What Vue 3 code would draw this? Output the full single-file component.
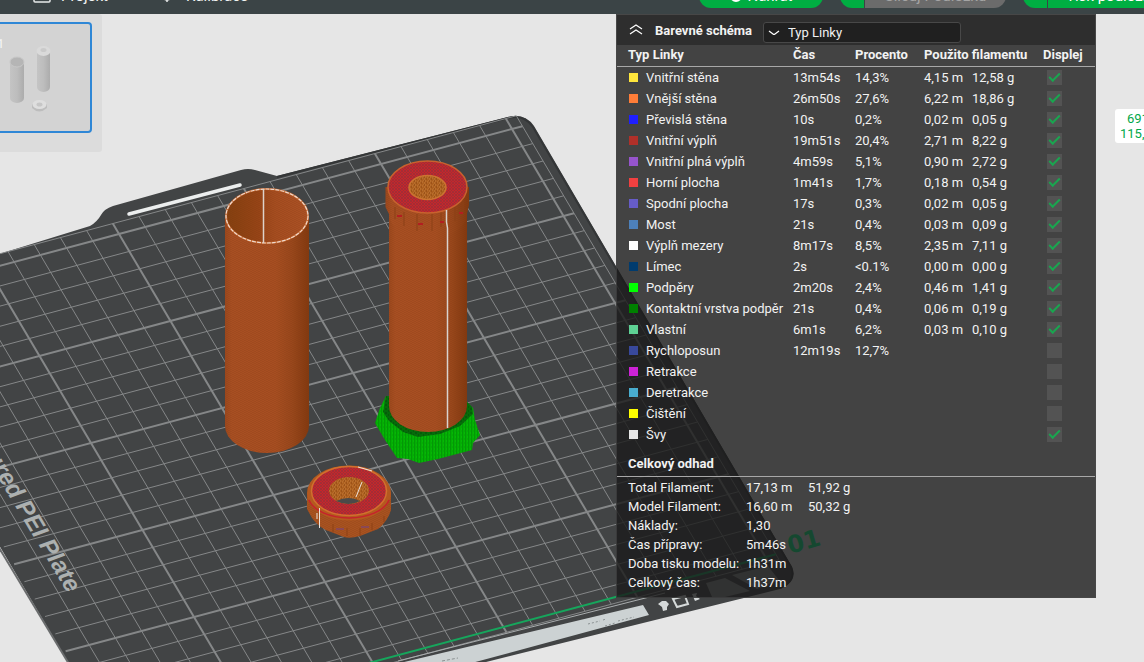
<script setup>
import { ref } from 'vue'

const lines = ref([
  { name: 'Vnitřní stěna', color: '#ffe63c', time: '13m54s', pct: '14,3%', m: '4,15 m', g: '12,58 g', on: true },
  { name: 'Vnější stěna', color: '#ff7d38', time: '26m50s', pct: '27,6%', m: '6,22 m', g: '18,86 g', on: true },
  { name: 'Převislá stěna', color: '#1f1fff', time: '10s', pct: '0,2%', m: '0,02 m', g: '0,05 g', on: true },
  { name: 'Vnitřní výplň', color: '#b03029', time: '19m51s', pct: '20,4%', m: '2,71 m', g: '8,22 g', on: true },
  { name: 'Vnitřní plná výplň', color: '#9654cc', time: '4m59s', pct: '5,1%', m: '0,90 m', g: '2,72 g', on: true },
  { name: 'Horní plocha', color: '#f04040', time: '1m41s', pct: '1,7%', m: '0,18 m', g: '0,54 g', on: true },
  { name: 'Spodní plocha', color: '#665cc7', time: '17s', pct: '0,3%', m: '0,02 m', g: '0,05 g', on: true },
  { name: 'Most', color: '#4d80ba', time: '21s', pct: '0,4%', m: '0,03 m', g: '0,09 g', on: true },
  { name: 'Výplň mezery', color: '#ffffff', time: '8m17s', pct: '8,5%', m: '2,35 m', g: '7,11 g', on: true },
  { name: 'Límec', color: '#003b6e', time: '2s', pct: '<0.1%', m: '0,00 m', g: '0,00 g', on: true },
  { name: 'Podpěry', color: '#00ff00', time: '2m20s', pct: '2,4%', m: '0,46 m', g: '1,41 g', on: true },
  { name: 'Kontaktní vrstva podpěr', color: '#008000', time: '21s', pct: '0,4%', m: '0,06 m', g: '0,19 g', on: true },
  { name: 'Vlastní', color: '#5ed194', time: '6m1s', pct: '6,2%', m: '0,03 m', g: '0,10 g', on: true },
  { name: 'Rychloposun', color: '#38489b', time: '12m19s', pct: '12,7%', m: '', g: '', on: false },
  { name: 'Retrakce', color: '#cd22d6', time: '', pct: '', m: '', g: '', on: false },
  { name: 'Deretrakce', color: '#49adcf', time: '', pct: '', m: '', g: '', on: false },
  { name: 'Čištění', color: '#ffff00', time: '', pct: '', m: '', g: '', on: false },
  { name: 'Švy', color: '#e6e6e6', time: '', pct: '', m: '', g: '', on: true },
])

const totals = [
  ['Total Filament:', '17,13 m', '51,92 g'],
  ['Model Filament:', '16,60 m', '50,32 g'],
  ['Náklady:', '1,30', ''],
  ['Čas přípravy:', '5m46s', ''],
  ['Doba tisku modelu:', '1h31m', ''],
  ['Celkový čas:', '1h37m', ''],
]

// Plate grid in cell units; every fifth line is heavier.
const left = -14.9
const right = 10.4
const back = -10.6
const front = 14.9
let thin = ''
let bold = ''
for (let i = -14; i <= 10; i++) {
  const d = `M${i} ${back}V${front}`
  if (i % 5 === 0) bold += d
  else thin += d
}
for (let j = -10; j <= 14; j++) {
  const d = `M${left} ${j}H${right}`
  if (j % 5 === 0) bold += d
  else thin += d
}
</script>

<template>
  <div class="app">
    <header class="topbar">
      <nav class="tabs">
        <a href="#projekt" class="tab">
          <svg width="18" height="18" viewBox="0 0 18 18" fill="none" stroke="#e8eaea" stroke-width="1.5">
            <rect x="1" y="1" width="16" height="14" rx="1" />
            <path d="M4 5h10M4 9h3M4 12h3M9 9h5v3h-5z" />
          </svg>
          Projekt
        </a>
        <a href="#kalibrace" class="tab">
          <svg width="18" height="18" viewBox="0 0 18 18" fill="none" stroke="#e8eaea" stroke-width="1.5">
            <circle cx="9" cy="8" r="5" />
            <path d="M9 12v3M3 12h3M12 12h3M9 1v3" />
          </svg>
          Kalibrace
        </a>
      </nav>
      <div class="actions">
        <button class="pill upload">
          <svg width="12" height="12" viewBox="0 0 12 12" fill="none" stroke="#fff" stroke-width="2">
            <circle cx="6" cy="6" r="5" /><path d="M6 3v5" />
          </svg>
          Nahrát
        </button>
        <div class="split">
          <button class="pill drop" aria-label="Možnosti slicování"></button>
          <button class="pill main off">Slicuj Podložku</button>
        </div>
        <div class="split">
          <button class="pill drop" aria-label="Možnosti tisku"></button>
          <button class="pill main wide">Tisk podložky</button>
        </div>
      </div>
    </header>

    <main class="view">
      <svg class="scene" viewBox="0 14 1144 648" preserveAspectRatio="xMinYMin slice" aria-hidden="true">
        <defs>
          <linearGradient id="wall" x1="0" x2="1">
            <stop offset="0" stop-color="#9c481d" />
            <stop offset=".08" stop-color="#a84f22" />
            <stop offset=".6" stop-color="#a74e21" />
            <stop offset=".8" stop-color="#99471b" />
            <stop offset="1" stop-color="#83390f" />
          </linearGradient>
          <linearGradient id="bore" x1="0" x2="1">
            <stop offset="0" stop-color="#84400f" />
            <stop offset=".4" stop-color="#974416" />
            <stop offset=".6" stop-color="#a64d20" />
            <stop offset="1" stop-color="#ab5124" />
          </linearGradient>
          <linearGradient id="gray" x1="0" x2="1">
            <stop offset="0" stop-color="#c4c4c4" />
            <stop offset=".5" stop-color="#bdbdbd" />
            <stop offset="1" stop-color="#acacac" />
          </linearGradient>
          <pattern id="layers" width="4" height="2" patternUnits="userSpaceOnUse">
            <path d="M0 .5h2M2 1.5h2" stroke="#6e3211" stroke-opacity=".15" stroke-width="1" />
          </pattern>
          <pattern id="weave" width="3" height="3" patternUnits="userSpaceOnUse">
            <rect width="3" height="3" fill="#c5262b" />
            <path d="M0 0l3 3M0 3l3-3" stroke="#96303a" stroke-width=".7" />
          </pattern>
          <pattern id="grain" width="5" height="4" patternUnits="userSpaceOnUse">
            <rect width="5" height="4" fill="#ad601f" />
            <path d="M0 1h1M3 0h1M2 2h1M4 3h1" stroke="#c47c3a" />
            <path d="M1 3h1M4 1h1" stroke="#8b4512" />
          </pattern>
          <pattern id="ribs" width="3" height="4" patternUnits="userSpaceOnUse">
            <rect width="3" height="4" fill="#04ad04" />
            <path d="M.5 0v4" stroke="#039806" />
            <path d="M2 1h1" stroke="#05c405" />
          </pattern>
          <pattern id="moss" width="5" height="4" patternUnits="userSpaceOnUse">
            <rect width="5" height="4" fill="#066c0a" />
            <path d="M0 1h2M3 3h1" stroke="#044b09" />
          </pattern>
        </defs>

        <path d="M-4 255L90 226Q97 222 101 215Q104 209 113 206L241 170Q248 168 255 170L277 176L508 117Q525 113 534 126L792 567Q798 581 780 589L478 664H69L-4 540Z" fill="#424445" />
        <path d="M-2 546L69 664" stroke="#6a6c6d" stroke-width="2" />
        <path d="M277 177L508 118Q524 114 533 127L791 567Q797 581 780 588" fill="none" stroke="#343637" stroke-width="2" />
        <path d="M129 214L240 185" stroke="#eceeee" stroke-width="3.5" stroke-linecap="round" />

        <g transform="matrix(26.2 -7 10.3 17.4 353 373)" fill="none">
          <path class="line" :d="thin" stroke="#858788" stroke-width="1" />
          <path class="line" :d="bold" stroke="#858788" stroke-width="2" />
          <path class="line" d="M-14.9 -10.6H10.4V14.9H-14.9" stroke="#858788" stroke-width="1" />
          <path class="line" d="M-8 14.6H10.4" stroke="#16a65c" stroke-width="2" />
        </g>

        <g transform="translate(68 594) rotate(59)">
          <text class="plate-name" text-anchor="end">Textured PEI Plate</text>
        </g>
        <g transform="translate(790 554) rotate(-16)">
          <text class="plate-no">01</text>
        </g>

        <path d="M400 663L643 605L649 615L468 664Z" fill="#ccd2d3" />
        <path d="M398 661L665 593" stroke="#a9adae" stroke-width="1" />
        <g stroke="#8b9192" stroke-width="1" fill="none">
          <path d="M588 624l12-3M603 620l3-1M605 626l10-3M618 621l16-4" stroke-dasharray="2 2" />
          <path d="M442 661l16-3" stroke-dasharray="3 2" />
        </g>
        <path d="M658 604l4-3 4 0 3 3-2 3 0 3-4 1-1-4z" fill="#d6dada" />
        <path d="M673 599l12-3 3 8-11 3z" fill="none" stroke="#d6dada" stroke-width="2" />
        <path d="M692 594l5-1-1 3 4 3-5 2z" fill="#d6dada" />
        <path d="M706 583L725 578L750 591L725 597H712ZM732 575L768 566L775 575L779 580L757 589Z" fill="#8d8f90" />

        <!-- open tube -->
        <path d="M225 216V426A42 27 0 0 0 309 426V216Z" fill="url(#wall)" />
        <path d="M225 216V426A42 27 0 0 0 309 426V216Z" fill="url(#layers)" />
        <ellipse cx="267" cy="216" rx="41" ry="27" fill="url(#bore)" />
        <ellipse cx="267" cy="216" rx="41" ry="27" fill="url(#layers)" />
        <ellipse cx="267" cy="216" rx="41" ry="27" fill="none" stroke="#c4672f" stroke-width="2" />
        <ellipse cx="267" cy="216" rx="41" ry="27" fill="none" stroke="#eed8cc" stroke-width="1.2" stroke-dasharray="4 1" />
        <path d="M263.500 189V243" stroke="#ddd2ca" stroke-width="1.5" />

        <!-- support skirt -->
        <path d="M386 396L380 408L375 423L385 440L397 458L408 459L419 463L438 459L472 450L473 443L480 435L475 420L473 408L467 402Z" fill="url(#ribs)" />
        <path d="M386 396L383 412L389 421L403 432L418 437L440 434L460 426L473 414L472 407L467 402Z" fill="url(#moss)" />

        <!-- capped tube -->
        <path d="M389 200V406A39 26 0 0 0 467 406V200Z" fill="url(#wall)" />
        <path d="M389 200V406A39 26 0 0 0 467 406V200Z" fill="url(#layers)" />
        <path d="M385.500 187V207L389 214A39 24 0 0 0 467 214L469 205V187Z" fill="url(#wall)" />
        <path d="M385.500 187V207L389 214A39 24 0 0 0 467 214L469 205V187Z" fill="url(#layers)" />
        <path d="M395 207v12M404 212v14M417 214v17M432 214v17M441 211v16M455 207v14M463 200v12" stroke="#8b4016" stroke-width="1" />
        <path d="M397 216h5M418 224h5M440 222h4M459 213h4" stroke="#b31e21" stroke-width="2" />
        <ellipse cx="427.500" cy="187" rx="39.500" ry="26" fill="url(#weave)" stroke="#c8622e" stroke-width="1.500" />
        <ellipse cx="427.500" cy="187.500" rx="18.500" ry="12" fill="url(#grain)" stroke="#cb7431" stroke-width="1.500" />
        <path d="M446.500 210V222L447.500 228V428" stroke="#d9d3ce" stroke-width="1.500" fill="none" />

        <!-- ring -->
        <path d="M307 493V509L312 518Q320 529 331 532L344 537Q350 539 360 536L378 529Q388 521 391 510V493Z" fill="#a85220" />
        <path d="M307 493V509L312 518Q320 529 331 532L344 537Q350 539 360 536L378 529Q388 521 391 510V493Z" fill="url(#layers)" />
        <ellipse cx="349" cy="493" rx="42" ry="27.500" fill="#b4591f" />
        <path d="M309 500A41 23 0 0 0 389 500" fill="none" stroke="#c6222c" stroke-width="1.500" />
        <ellipse cx="349" cy="491" rx="37.500" ry="24.500" fill="url(#weave)" stroke="#d1702e" stroke-width="1.500" />
        <ellipse cx="349" cy="490.500" rx="20" ry="13.500" fill="url(#grain)" />
        <path d="M336 501Q349 495 360 501Q349 507 336 501Z" fill="#4b4a49" />
        <path d="M362 482L356 497M358 467L372 471M319.500 508V528M317 513v6" stroke="#ece4dd" stroke-width="1" fill="none" />
        <path d="M336 529h8M361 527h8" stroke="#71408a" stroke-width="1" />
        <path d="M333 524v8M347 528v8M360 528v8M372 523v7M384 516v6" stroke="#8c4115" stroke-width="1" />
      </svg>

      <aside class="plates">
        <button class="plate" aria-label="Podložka 1">
          <span class="plate-index">1</span>
          <svg class="thumb" width="60" height="84" viewBox="0 0 60 84" aria-hidden="true">
            <path d="M10 24V60A7 5 0 0 0 24 60V24Z" fill="url(#gray)" />
            <ellipse cx="17" cy="24" rx="7" ry="5" fill="#b5b5b5" stroke="#c8c8c8" />
            <path d="M37 12V49A6.500 5 0 0 0 50 49V12Z" fill="url(#gray)" />
            <ellipse cx="43.500" cy="13" rx="7" ry="5" fill="#dadada" />
            <ellipse cx="43.500" cy="12" rx="3" ry="2" fill="#cacaca" />
            <path d="M32 66V70Q39 77 47 70V66Z" fill="#bdbdbd" />
            <ellipse cx="39.500" cy="66.500" rx="7" ry="4.500" fill="#dedede" />
            <ellipse cx="39.500" cy="66.500" rx="3" ry="2" fill="#c6c6c6" />
          </svg>
        </button>
      </aside>

      <section class="panel">
        <div class="panel-head">
          <button class="fold" aria-label="Sbalit">
            <svg width="14" height="12" viewBox="0 0 14 12" fill="none" stroke="#fff" stroke-width="1.200">
              <path d="M1 5l6-4 6 4M1 10l6-4 6 4" />
            </svg>
          </button>
          <label class="scheme-label" for="scheme">Barevné schéma</label>
          <div class="picker">
            <select id="scheme"><option>Typ Linky</option></select>
            <svg class="caret" width="12" height="6" viewBox="0 0 12 6" fill="none" stroke="#fff" stroke-width="1.200">
              <path d="M1 1l4 3q1 .8 2 0l4-3" />
            </svg>
          </div>
        </div>

        <table class="legend">
          <colgroup>
            <col class="c-name" /><col class="c-time" /><col class="c-pct" /><col class="c-m" /><col class="c-g" /><col />
          </colgroup>
          <thead>
            <tr>
              <th class="first">Typ Linky</th>
              <th>Čas</th>
              <th>Procento</th>
              <th colspan="2">Použito filamentu</th>
              <th>Displej</th>
            </tr>
          </thead>
          <tbody>
            <tr v-for="(l, n) in lines" :key="l.name">
              <td class="first">
                <label class="name" :for="'line' + n">
                  <span class="swatch" :style="{ background: l.color }"></span>{{ l.name }}
                </label>
              </td>
              <td>{{ l.time }}</td>
              <td>{{ l.pct }}</td>
              <td>{{ l.m }}</td>
              <td>{{ l.g }}</td>
              <td><input :id="'line' + n" v-model="l.on" class="tick" type="checkbox" /></td>
            </tr>
          </tbody>
        </table>

        <h2 class="sum-title">Celkový odhad</h2>
        <table class="sums">
          <tbody>
            <tr v-for="t in totals" :key="t[0]">
              <th class="first">{{ t[0] }}</th>
              <td>{{ t[1] }}</td>
              <td>{{ t[2] }}</td>
            </tr>
          </tbody>
        </table>
      </section>

      <div class="height-tag">
        <span class="layer">691</span>
        <span>115,</span>
      </div>
    </main>
  </div>
</template>

<style>
body {
  margin: 0;
  overflow: hidden;
}
</style>

<style scoped>
.app {
  display: flex;
  flex-direction: column;
  height: 100vh;
  font-family: Roboto, "Noto Sans", sans-serif;
  font-size: 13px;
  color: #f2f2f2;
  background: #e6e6e6;
}
button,
select {
  font: inherit;
  color: inherit;
  border: 0;
  padding: 0;
  background: none;
}
.topbar {
  display: flex;
  flex: none;
  justify-content: space-between;
  align-items: flex-end;
  height: 14px;
  overflow: hidden;
  background: #3b4446;
}
.tabs {
  display: flex;
  gap: 50px;
  padding: 0 0 8px 33px;
}
.tab {
  display: flex;
  align-items: center;
  gap: 10px;
  height: 20px;
  font-size: 15px;
  color: #f2f4f4;
  text-decoration: none;
  white-space: nowrap;
}
.tab svg {
  flex: none;
}
.actions {
  display: flex;
  flex: none;
  gap: 17px;
  padding-bottom: 6px;
}
.split {
  display: flex;
  gap: 1px;
}
.pill {
  display: flex;
  align-items: center;
  justify-content: center;
  gap: 6px;
  height: 24px;
  border-radius: 12px;
  background: #00ae42;
  color: #fff;
  font-size: 15px;
  white-space: nowrap;
}
.upload {
  width: 124px;
}
.drop {
  width: 24px;
  border-radius: 12px 0 0 12px;
}
.main {
  width: 141px;
  border-radius: 0 12px 12px 0;
}
.main.wide {
  box-sizing: border-box;
  width: 96px;
  border-radius: 0;
  justify-content: flex-start;
  padding-left: 18px;
}
.off {
  background: #6b6b6b;
  color: #a4a4a4;
}
.view {
  position: relative;
  flex: 1;
  min-height: 0;
  overflow: hidden;
}
.scene {
  display: block;
  width: 100%;
  height: 100%;
}
.line {
  vector-effect: non-scaling-stroke;
}
.plate-name {
  font: italic bold 24px "Liberation Sans", sans-serif;
  fill: #acb0b0;
}
.plate-no {
  font: bold 24px "DejaVu Sans", sans-serif;
  fill: #00ff88;
}
.plates {
  position: absolute;
  top: 0;
  left: 0;
  padding: 8px 10px 19px 0;
  background: #dcdcdc;
  border-radius: 0 3px 3px 0;
}
.plate {
  position: relative;
  display: flex;
  align-items: flex-start;
  box-sizing: border-box;
  width: 92px;
  height: 111px;
  padding-top: 14px;
  border: 2px solid #2f87d6;
  border-left: 0;
  border-radius: 0 4px 4px 0;
  background: #d3d3d3;
}
.plate-index {
  position: absolute;
  top: 12px;
  left: -3px;
  color: #f6f6f6;
}
.panel {
  position: absolute;
  top: 0;
  right: 48px;
  width: 480px;
  box-sizing: border-box;
  padding-bottom: 5px;
  background: rgba(26, 26, 26, 0.8);
  border: 1px solid rgba(75, 75, 75, 0.6);
}
.panel-head {
  display: flex;
  align-items: center;
  height: 30px;
  padding-left: 12px;
  background: rgba(26, 26, 26, 0.5);
}
.fold {
  display: flex;
}
.scheme-label {
  width: 108px;
  margin-left: 12px;
  font-weight: 700;
  white-space: nowrap;
}
.picker {
  position: relative;
  margin-top: 5px;
}
.picker select {
  display: block;
  box-sizing: border-box;
  width: 198px;
  height: 21px;
  padding-left: 24px;
  appearance: none;
  background: #202020;
  border: 1px solid #484848;
  border-radius: 3px;
}
.caret {
  position: absolute;
  top: 8px;
  left: 5px;
  pointer-events: none;
}
table {
  width: 100%;
  border-collapse: collapse;
  table-layout: fixed;
}
th,
td {
  padding: 0;
  text-align: left;
  white-space: nowrap;
}
.first {
  padding-left: 11px;
}
.c-name { width: 176px; }
.c-time { width: 62px; }
.c-pct { width: 69px; }
.c-m { width: 48px; }
.c-g { width: 71px; }
.legend th {
  height: 21px;
  line-height: 19px;
  font-weight: 700;
  vertical-align: top;
}
.legend thead tr {
  border-bottom: 1px solid #a8a8a8;
}
.legend td {
  height: 21px;
  line-height: 21px;
}
.legend td:last-child {
  padding-left: 4px;
}
.name {
  display: flex;
  align-items: center;
}
.swatch {
  width: 9px;
  height: 9px;
  margin: 0 8px 0 1px;
}
.tick {
  display: grid;
  place-items: center;
  width: 15px;
  height: 15px;
  margin: 0;
  appearance: none;
  background: #535353;
}
.tick:checked::after {
  content: "";
  width: 11px;
  height: 6px;
  margin-bottom: 3px;
  border: solid #1aa550;
  border-width: 0 0 2px 2px;
  box-sizing: border-box;
  transform: rotate(-45deg);
}
.sum-title {
  margin: 0 0 1px;
  padding: 8px 0 1px 11px;
  border-bottom: 1px solid #a8a8a8;
  font-size: 13px;
  line-height: 22px;
  font-weight: 700;
}
.sums th,
.sums td {
  height: 19px;
  line-height: 19px;
  font-weight: 400;
}
.sums th {
  width: 118px;
}
.sums td {
  width: 62px;
}
.sums td:last-child {
  width: auto;
}
.height-tag {
  position: absolute;
  top: 95px;
  right: 0;
  display: flex;
  flex-direction: column;
  width: 24px;
  height: 32px;
  padding: 2px 0 0 5px;
  border-radius: 3px 0 0 3px;
  overflow: hidden;
  background: #fff;
  color: #00a84a;
  line-height: 15px;
}
.layer {
  padding-left: 7px;
}
</style>
